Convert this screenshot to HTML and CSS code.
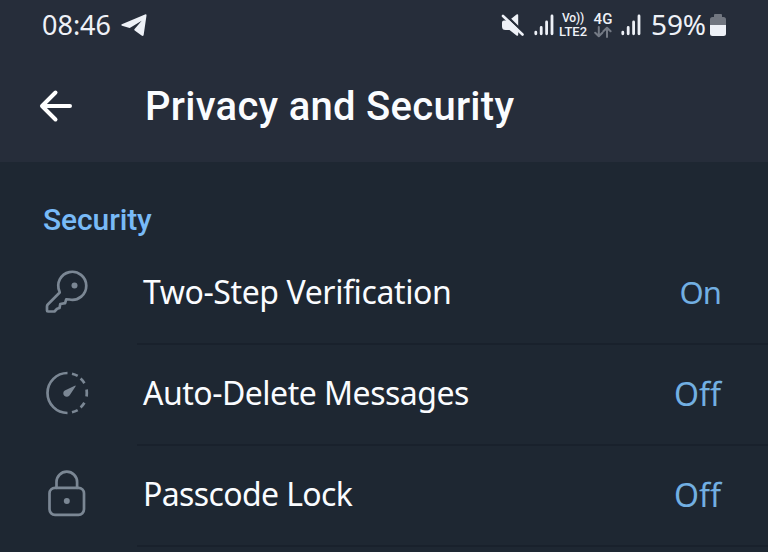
FILE: index.html
```html
<!DOCTYPE html>
<html lang="en">
<head>
<meta charset="utf-8">
<title>Privacy and Security</title>
<link rel="stylesheet" href="styles.css">
</head>
<body>
<header class="header">
  <div class="status">
    <span class="time">08:46</span>
    <svg class="plane" width="28" height="26" viewBox="0 0 28 26"><path d="M1.800 12.200 25 2.400q1.700-.6 1.500 1.200L23.700 22.700q-.4 2-2.100.9L14.700 18.600q-1-.8-.1-1.700L21.700 8.700 10.600 15.600q-.8.5-1.800.2L2 13.800q-1.600-.7-.2-1.600z"/></svg>
    <span class="spacer"></span>
    <svg class="mute" width="24" height="24" viewBox="0 0 24 24"><path class="fill" d="M3 7.500h5L15.500 1.500q1.700-1 1.700.7v19.600q0 1.700-1.700.7L8.500 17H4.500Q1 17 1 13.500V9.500q0-2 2-2z"/><path class="cut" d="M4.200 1.500 23 20"/><path class="slash" d="M2 3 21.500 21.500"/></svg>
    <svg class="signal first" width="20" height="22" viewBox="0 0 20 22"><path d="M1.800 18.200v1.600M7.200 13.400v6.400M12.600 8v11.800M18 2v17.800"/></svg>
    <span class="tag lte"><span class="vo">Vo))</span><span>LTE2</span></span>
    <span class="tag data"><span>4G</span><svg width="18" height="12" viewBox="0 0 18 12"><path d="M4.800 1v9M1.200 6.700l3.600 3.600 3.600-3.600M13 11V2M9.400 5.300 13 1.700l3.600 3.600"/></svg></span>
    <svg class="signal second" width="20" height="22" viewBox="0 0 20 22"><path d="M1.800 18.200v1.600M7.200 13.400v6.400M12.600 8v11.800M18 2v17.800"/></svg>
    <span class="percent">59%</span>
    <svg class="battery" width="16" height="23" viewBox="0 0 16 23"><path class="empty" d="M5 0h6q1 0 1 1v2h1.500Q16 3 16 5.500V12H0V5.500Q0 3 2.500 3H4V1q0-1 1-1z"/><path class="charge" d="M0 11h16v8.500q0 2.500-2.500 2.500h-11Q0 22 0 19.500z"/></svg>
  </div>
  <div class="toolbar">
    <svg class="back" width="34" height="34" viewBox="0 0 34 34"><path d="M31 17H4M16.500 3.500 3 17l13.500 13.500"/></svg>
    <h1>Privacy and Security</h1>
  </div>
</header>
<main>
  <h2>Security</h2>
  <div class="row">
    <svg class="icon" width="46" height="48" viewBox="0 0 46 48"><path d="M15.500 23.500A14 14 0 1 1 25.500 31.500L22.200 31.300 21.100 35.200 16.300 36 15.500 40 13.100 40.800 10.500 43.500H4Q3 43.500 3 42.500V38.500Q3 37.300 3.800 36.500L15.700 24.500z"/><circle class="dot" cx="30.500" cy="17.500" r="3"/></svg>
    <div class="cell"><span class="label two-step">Two-Step Verification</span><span class="value on">On</span></div>
  </div>
  <div class="row">
    <svg class="icon" width="46" height="48" viewBox="0 0 46 48"><path class="butt" d="M23.500 4a20 20 0 0 0 0 40"/><path class="butt" d="M28 4.700q2.900.7 5.700 2.200M36.600 9.500q2.200 2 3.800 4.700M42.600 20.500q.4 3.500 0 7M40.400 33.800q-1.600 2.700-3.800 4.700M33.700 41.100q-2.800 1.500-5.700 2.200"/><path class="dot" d="M30.800 16.800q1.300-.7.700.7L25.700 26.200a3.500 3.500 0 1 1-4.900-4.800z"/></svg>
    <div class="cell"><span class="label auto">Auto-Delete Messages</span><span class="value">Off</span></div>
  </div>
  <div class="row">
    <svg class="icon" width="46" height="48" viewBox="0 0 46 48"><rect x="5.500" y="17.800" width="34.500" height="27" rx="5.500"/><path d="M12.500 17.800V12a10.300 10.300 0 0 1 20.600 0V17.800"/><circle class="dot" cx="22.800" cy="31" r="3"/></svg>
    <div class="cell"><span class="label passcode">Passcode Lock</span><span class="value">Off</span></div>
  </div>
</main>
</body>
</html>
```
FILE: styles.css
```css
* { box-sizing: border-box; }
body {
  margin: 0;
  height: 552px;
  overflow: hidden;
  background: #1e2732;
  color: #fafcff;
  font-family: "Noto Sans", sans-serif;
}
svg { display: block; flex: none; fill: none; stroke-linecap: round; stroke-linejoin: round; }
.header { height: 162px; background: #262d3a; }
.status { display: flex; align-items: center; height: 50px; padding: 0 42px 0 42px; color: #eef1f7; }
.time, .percent { font-size: 27px; line-height: 50px; }
.plane { margin-left: 9px; fill: #eef1f7; }
.spacer { flex: 1; }
.mute .fill { fill: #eef1f7; }
.cut { stroke: #262d3a; stroke-width: 2.4; }
.slash { stroke: #eef1f7; stroke-width: 2.6; }
.signal path { stroke: #eef1f7; stroke-width: 2.8; }
.first { margin-left: 9px; }
.tag { display: flex; flex-direction: column; align-items: center; font: 500 13px/13px Roboto, sans-serif; }
.lte { margin-left: 4px; width: 30px; }
.vo { font-size: 12px; line-height: 13px; letter-spacing: -0.2px; }
.data { width: 20px; margin-left: 5px; font-size: 15px; }
.data svg { stroke: #747a85; stroke-width: 2; }
.second { margin-left: 8px; }
.percent { margin-left: 10px; padding-bottom: 1px; font-size: 28px; line-height: 49px; letter-spacing: -0.1px; }
.battery { margin-left: 4px; }
.empty { fill: #717680; }
.charge { fill: #eef1f7; }
.toolbar { display: flex; align-items: center; height: 112px; padding-left: 39px; }
.back { stroke: #fff; stroke-width: 4; }
h1 { margin: 0 0 0 72px; font: 500 40px/112px Roboto, sans-serif; letter-spacing: 0.28px; padding-top: 2px; white-space: nowrap; }
h2 { margin: 0; height: 82px; padding: 34px 0 0 43px; color: #78baf7; font: 500 30px/48px Roboto, sans-serif; letter-spacing: -0.1px; }
.row { display: flex; align-items: center; height: 101px; padding-left: 44px; }
.icon { margin-bottom: 6px; stroke: #7b8794; stroke-width: 2.7; }
.butt { stroke-linecap: butt; }
.dot { fill: #7b8794; stroke: none; }
.cell { display: flex; flex: 1; align-items: center; justify-content: space-between; height: 101px; margin-left: 47px; padding: 0 47px 0 6px; border-bottom: 2px solid #19212c; font-size: 32px; white-space: nowrap; }
.label { padding-bottom: 5px; }
.two-step { letter-spacing: -0.4px; }
.auto { letter-spacing: -0.5px; }
.passcode { letter-spacing: -0.62px; }
.value { padding-bottom: 2px; color: #72afe2; }
.on { padding-bottom: 3px; font-size: 31px; letter-spacing: -0.9px; }
```
